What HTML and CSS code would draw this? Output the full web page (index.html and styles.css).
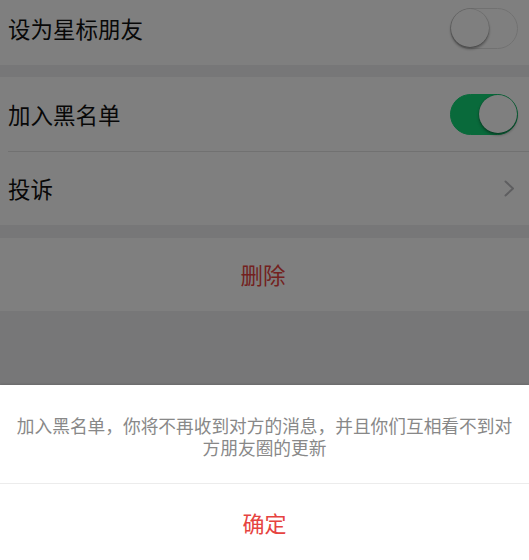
FILE: index.html
```html
<!DOCTYPE html>
<html lang="zh-CN">
<head>
<meta charset="utf-8">
<title>资料设置</title>
<link rel="stylesheet" href="styles.css">
</head>
<body>
<div class="screen">
  <div class="settings">
    <div class="group group-first">
      <div class="row">
        <span class="label">设为星标朋友</span>
        <span class="switch"><span class="knob"></span></span>
      </div>
    </div>
    <div class="group">
      <div class="row">
        <span class="label">加入黑名单</span>
        <span class="switch on"><span class="knob"></span></span>
      </div>
      <div class="divider"></div>
      <div class="row row-link">
        <span class="label">投诉</span>
        <svg class="chevron" width="11" height="17" viewBox="0 0 11 17"><path d="M1.5 1.5 L9 8.5 L1.5 15.5" fill="none" stroke="#bcbcc0" stroke-width="2" stroke-linecap="round" stroke-linejoin="round"/></svg>
      </div>
    </div>
    <div class="group">
      <div class="row row-center">
        <span class="danger">删除</span>
      </div>
    </div>
  </div>
  <div class="mask"></div>
  <div class="sheet">
    <div class="sheet-msg">加入黑名单，你将不再收到对方的消息，并且你们互相看不到对方朋友圈的更新</div>
    <div class="sheet-btn">确定</div>
  </div>
</div>
</body>
</html>
```
FILE: styles.css
```css
html, body {
  margin: 0;
  padding: 0;
}
body {
  font-family: "Noto Sans CJK SC", "Noto Sans", sans-serif;
  background: #efeff4;
}
.screen {
  position: relative;
  width: 529px;
  height: 560px;
  overflow: hidden;
  background: #eeeef0;
}
.settings {
  display: flex;
  flex-direction: column;
  gap: 12px;
}
.group {
  background: #ffffff;
  display: flex;
  flex-direction: column;
}
.group-first {
  margin-top: -9px;
}
.group + .group + .group {
  margin-top: 1px;
}
.row {
  height: 74px;
  display: flex;
  align-items: center;
  justify-content: space-between;
  padding: 0 11px 0 8px;
  box-sizing: border-box;
}
.divider {
  height: 1px;
  margin-left: 8px;
  background: #e2e2e2;
}
.row-link {
  height: 73px;
  padding-right: 14px;
}
.row-center {
  justify-content: center;
  height: 73px;
}
.label {
  font-size: 22.5px;
  color: #111111;
  line-height: 1;
}
.danger {
  font-size: 22.5px;
  color: #e64340;
  line-height: 1;
}
.switch {
  width: 68px;
  height: 41px;
  border-radius: 21px;
  box-sizing: border-box;
  border: 1.5px solid #e3e3e3;
  background: #ffffff;
  display: flex;
  align-items: center;
  padding: 0;
}
.knob {
  width: 38px;
  height: 38px;
  border-radius: 50%;
  background: #ffffff;
  box-shadow: 0 2px 3px rgba(0, 0, 0, 0.4), 0 0 0 0.5px rgba(0, 0, 0, 0.15);
}
.switch.on {
  background: #12d476;
  border-color: #12d476;
  justify-content: flex-end;
}
.chevron {
  display: block;
}
.mask {
  position: absolute;
  inset: 0;
  background: rgba(0, 0, 0, 0.5);
}
.sheet {
  position: absolute;
  left: 0;
  right: 0;
  bottom: 0;
  height: 175px;
  background: #ffffff;
  display: flex;
  flex-direction: column;
  box-shadow: 0 -1px 2px rgba(0, 0, 0, 0.12);
}
.sheet-msg {
  height: 99px;
  box-sizing: border-box;
  padding: 29px 15px 0;
  font-size: 17.7px;
  line-height: 22px;
  color: #888888;
  text-align: center;
  border-bottom: 1px solid #ececec;
}
.sheet-btn {
  flex: 1;
  display: flex;
  align-items: center;
  justify-content: center;
  font-size: 22px;
  color: #e64340;
}
```
